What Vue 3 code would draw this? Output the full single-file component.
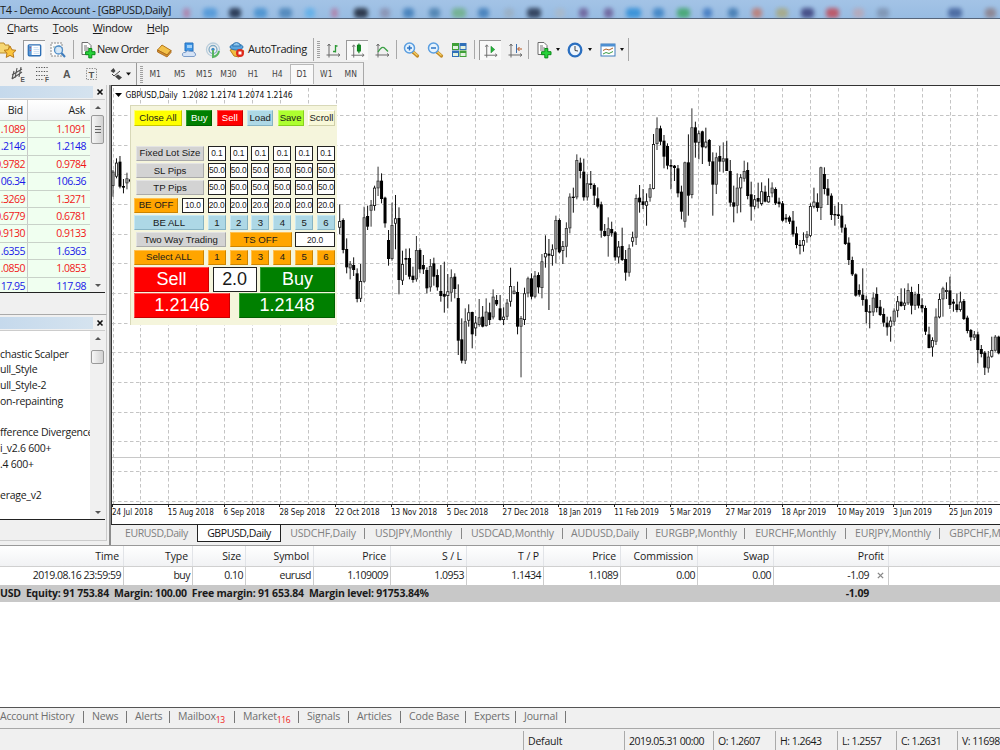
<script setup>
import { ref } from 'vue'

const menus = ['Charts', 'Tools', 'Window', 'Help']

// toolbar slots, left to right; w is the slot width
const toolbar = [
  { icon: 'star', w: 18 },
  { icon: 'nav', w: 31, on: true },
  { icon: 'search', w: 18 },
  { sep: true, w: 12 },
  { icon: 'order', w: 18 },
  { text: 'New Order', w: 58 },
  { icon: 'book', w: 18 },
  { icon: 'cloud', w: 31 },
  { icon: 'signal', w: 18 },
  { icon: 'auto', w: 26 },
  { text: 'AutoTrading', w: 66, end: true },
  { grip: true, w: 8 },
  { icon: 'bars', w: 22 },
  { icon: 'candle', w: 26, on: true },
  { icon: 'line', w: 24 },
  { sep: true, w: 4 },
  { icon: 'zoomin', w: 26 },
  { icon: 'zoomout', w: 22 },
  { icon: 'tiles', w: 26 },
  { sep: true, w: 4 },
  { icon: 'scroll', w: 28, on: true },
  { icon: 'shift', w: 22 },
  { sep: true, w: 4 },
  { w: 3 },
  { icon: 'addind', w: 22 },
  { arrow: true, w: 5 },
  { w: 3 },
  { icon: 'clock', w: 24 },
  { arrow: true, w: 5 },
  { w: 5 },
  { icon: 'template', w: 22 },
  { arrow: true, w: 5 },
  { w: 5, end: true }
]

const frames = ['M1', 'M5', 'M15', 'M30', 'H1', 'H4', 'D1', 'W1', 'MN']

// running taskbar icons seen through the title bar glass
const glass = [
  [186, 7, '#b07fa8'], [210, 14, '#4f97d8'], [235, 12, '#1c2a44'], [260, 13, '#4690cf'], [285, 13, '#4a83b8'],
  [310, 10, '#5fb0ea'], [334, 7, '#b07fa8'], [361, 14, '#1c2536'], [385, 10, '#8a90b0'], [408, 11, '#3f7cb8'],
  [434, 11, '#4a7fae'], [459, 14, '#6fb088'], [483, 11, '#3f7cb8'], [509, 10, '#9bb0c4'], [534, 14, '#25334d'],
  [560, 10, '#a9b9cb'], [583, 9, '#6a5c96'], [608, 9, '#6a5c96'], [633, 15, '#2f8ed8'], [658, 11, '#3b82c4'],
  [683, 13, '#3fa66a'], [707, 9, '#3f78c0'], [733, 10, '#3f78b0'], [757, 10, '#c07a70'], [782, 12, '#a8a880'],
  [807, 13, '#3a3f7a'], [832, 13, '#c04a58'], [858, 11, '#b8a8b8'], [883, 12, '#7e92b0'], [955, 14, '#41609a'],
  [990, 11, '#8c7f88']
]

const quotes = [
  ['1.1089', '1.1091', 0], ['1.2146', '1.2148', 1], ['0.9782', '0.9784', 0], ['106.34', '106.36', 1],
  ['1.3269', '1.3271', 0], ['0.6779', '0.6781', 0], ['0.9130', '0.9133', 0], ['1.6355', '1.6363', 1],
  ['1.0850', '1.0853', 0], ['117.95', '117.98', 1]
]

const scripts = ['', 'chastic Scalper', 'ull_Style', 'ull_Style-2', 'on-repainting', '', 'fference Divergence', 'i_v2.6 600+', '.4 600+', '', 'erage_v2']

// high low top bottom kind, in thirds of a pixel below the plot top
// b = bear, w = bull, g = bull drawn tight
const early = '240 320 245 288 g,205 265 218 260 w,198 295 215 290 b,267 310 288 293 b,248 298 265 280 g,265 280 268 275 b'
const series = `343 433 393 413 w,385 490 390 480 b,445 550 477 532 b,513 568 521 535 g,502 558 525 540 b,535 637 550 627 b,
522 636 573 626 w,350 578 382 575 g,347 420 378 410 b,330 410 345 362 g,287 362 293 348 w,230 318 272 295 g,
250 340 272 327 b,320 413 323 400 b,420 527 450 507 b,338 512 405 507 g,315 478 385 401 w,352 613 384 570 b,
482 585 522 572 w,476 555 504 509 b,475 568 504 560 b,530 578 557 570 b,438 575 480 568 g,475 550 480 538 b,
495 552 525 538 b,532 610 540 595 b,507 605 528 592 g,503 587 520 560 b,538 602 555 592 b,525 635 603 618 b,
515 668 612 620 b,552 655 604 618 w,538 635 562 608 g,550 625 560 597 b,583 795 624 752 b,685 820 748 812 b,
655 822 694 812 g,643 710 667 692 w,665 775 666 733 b,678 738 698 715 w,627 710 682 705 g,648 712 680 710 b,
625 710 665 708 g,638 705 667 690 b,598 688 620 682 g,615 648 630 643 b,615 692 655 690 b,652 705 680 690 w,
627 690 638 680 g,533 650 588 635 w,588 613 602 612 g,575 733 606 710 b,678 862 684 710 g,593 705 610 690 w,
560 622 565 610 g,550 628 565 620 b,543 625 557 620 g,547 610 555 592 b,492 625 514 594 g,436 533 489 502 w,
447 660 491 497 b,463 527 478 498 w,377 520 390 478 g,385 490 390 487 b,453 522 468 483 w,397 502 414 470 g,
310 430 320 415 g,293 368 320 324 b,193 328 210 322 g,203 265 218 243 b,206 332 245 322 b,253 332 280 322 g,
243 297 280 285 b,280 345 285 317 b,292 355 325 350 b,335 443 343 422 b,402 440 423 438 b,382 500 415 438 g,
395 440 417 430 b,423 512 427 502 b,453 520 470 502 w,413 513 468 510 b,480 572 507 548 b,463 560 475 548 g,
425 470 442 455 w,313 465 324 443 g,285 368 323 337 b,297 357 334 345 b,310 407 334 347 w,282 335 295 323 g,
132 298 162 297 w,82 180 115 162 g,107 165 115 155 b,135 235 152 200 b,160 238 168 227 b,208 298 225 230 b,
225 273 227 234 b,225 322 235 310 b,287 388 305 365 b,215 413 217 395 g,133 377 217 317 b,55 325 112 315 g,
95 203 112 158 b,122 208 130 158 w,122 222 124 172 b,113 175 155 172 w,147 228 150 215 b,187 377 214 284 b,
188 312 202 284 g,168 245 198 215 b,157 248 205 215 g,152 243 205 243 b,210 350 243 338 b,287 397 337 350 b,
250 370 293 347 g,252 367 262 295 w,212 275 243 266 g,217 328 240 318 b,275 392 313 350 b,315 358 328 350 w,
278 355 324 335 b,277 347 304 342 w,287 337 305 335 b,265 338 318 337 w,277 322 293 310 g,292 345 297 340 b,
323 352 335 342 b,333 395 340 392 b,372 398 383 388 b,377 402 382 395 b,363 440 392 433 b,410 475 430 465 b,
450 493 464 468 b,427 485 450 467 w,423 458 433 443 g,340 442 348 438 w,293 355 335 350 w,310 365 337 354 b,
230 390 232 354 g,232 313 252 297 b,267 345 295 317 b,310 390 317 375 b,347 407 372 376 b,337 387 373 378 b,
342 428 377 413 b,403 465 413 462 b,442 525 458 510 b,500 558 510 553 b,550 620 553 617 b,583 620 600 614 b,
535 647 614 630 b,617 700 628 666 b,645 715 664 668 b,607 678 623 667 g,592 667 612 654 b,630 678 650 675 b,
655 710 672 698 b,680 737 698 712 b,680 755 692 710 w,655 707 662 695 g,618 682 634 662 w,595 650 635 648 b,
595 660 638 647 w,580 645 600 640 g,590 673 606 647 b,605 660 613 647 g,582 655 612 647 b,625 667 645 655 b,
647 735 654 725 b,710 775 733 774 b,742 800 750 772 w,655 765 680 755 g,610 685 627 682 w,590 680 595 628 g,
577 627 600 606 w,560 657 601 645 b,627 665 635 641 b,610 667 643 660 b,605 665 635 660 w,627 690 633 687 b,
677 730 683 723 b,717 753 720 742 b,723 750 733 743 g,725 820 733 780 b,765 802 777 792 b,783 855 788 833 b,
783 848 800 835 g,740 803 780 800 w,735 785 740 782 g,737 793 740 790 b`

function parse(text, x0) {
  return text.split(',').map((row, i) => {
    const [h, l, t, b, kind] = row.trim().split(' ')
    return { x: x0 + i * 3.487, h: 90 + h / 3, l: 90 + l / 3, t: 90 + t / 3, b: 90 + b / 3, kind }
  })
}

const candles = [...parse(early, 113), ...parse(series, 339.7)]
const gridX = Array.from({ length: 32 }, (_, i) => Math.round(112.5 + i * 27.9) + 0.5)
const gridY = Array.from({ length: 14 }, (_, i) => Math.round(115 + i * 29.66) + 0.5)
const dates = ['24 Jul 2018', '15 Aug 2018', '6 Sep 2018', '28 Sep 2018', '22 Oct 2018', '13 Nov 2018', '5 Dec 2018', '27 Dec 2018', '18 Jan 2019', '11 Feb 2019', '5 Mar 2019', '27 Mar 2019', '18 Apr 2019', '10 May 2019', '3 Jun 2019', '25 Jun 2019']

const six = (text, kind) => Array.from({ length: 6 }, (_, i) => ({ text: text || String(i + 1), w: 18, kind }))
const panel = [
  { cls: 'top', cells: [
    { text: 'Close All', w: 48, kind: 'yellow' }, { text: 'Buy', w: 26, kind: 'green' }, { text: 'Sell', w: 26, kind: 'red' },
    { text: 'Load', w: 26, kind: 'blue' }, { text: 'Save', w: 26, kind: 'lime' }, { text: 'Scroll', w: 27, kind: 'cream' }
  ] },
  { cells: [{ text: 'Fixed Lot Size', w: 68, kind: 'gray' }, ...six('0.1', 'input')] },
  { cells: [{ text: 'SL Pips', w: 68, kind: 'gray' }, ...six('50.0', 'input')] },
  { cells: [{ text: 'TP Pips', w: 68, kind: 'gray' }, ...six('50.0', 'input')] },
  { cells: [{ text: 'BE OFF', w: 44, kind: 'orange' }, { text: '10.0', w: 22, kind: 'input' }, ...six('20.0', 'input')] },
  { cells: [{ text: 'BE ALL', w: 70, kind: 'blue' }, ...six('', 'blue')] },
  { cells: [{ text: 'Two Way Trading', w: 90, kind: 'gray' }, { text: 'TS OFF', w: 62, kind: 'orange' }, { text: '20.0', w: 40, kind: 'input' }] },
  { cells: [{ text: 'Select ALL', w: 70, kind: 'orange' }, ...six('', 'orange')] },
  { cls: 'big', cells: [{ text: 'Sell', w: 75, kind: 'red' }, { text: '2.0', w: 44, kind: 'input' }, { text: 'Buy', w: 75, kind: 'green' }] },
  { cls: 'big', cells: [{ text: '1.2146', w: 96, kind: 'red' }, { text: '1.2148', w: 96, kind: 'green' }] }
]

const activeTab = ref('GBPUSD,Daily')
const chartTabs = [
  ['EURUSD,Daily', 87], ['GBPUSD,Daily', 84], ['USDCHF,Daily', 84], ['USDJPY,Monthly', 97], ['USDCAD,Monthly', 101],
  ['AUDUSD,Daily', 84], ['EURGBP,Monthly', 98], ['EURCHF,Monthly', 101], ['EURJPY,Monthly', 94], ['GBPCHF,Monthly', 100]
]

const columns = [
  ['Time', 124, '2019.08.16 23:59:59'], ['Type', 69, 'buy'], ['Size', 53, '0.10'], ['Symbol', 68, 'eurusd'], ['Price', 77, '1.109009'],
  ['S / L', 76, '1.0953'], ['T / P', 77, '1.1434'], ['Price', 77, '1.1089'], ['Commission', 77, '0.00'], ['Swap', 76, '0.00'], ['Profit', 115, '-1.09']
]

const bottomTabs = [
  ['Account History', 84], ['News', 43], ['Alerts', 43], ['Mailbox', 65, '13'], ['Market', 64, '116'], ['Signals', 50],
  ['Articles', 52], ['Code Base', 65], ['Experts', 50], ['Journal', 50]
]

const status = [['Default', 101], ['2019.05.31 00:00', 89], ['O: 1.2607', 62], ['H: 1.2643', 62], ['L: 1.2557', 59], ['C: 1.2631', 61], ['V: 11698', 60]]
</script>

<template>
  <div class="terminal">
    <header class="titlebar">
      <i v-for="g in glass" :key="g[0]" class="glow" :style="{ left: g[0] - g[1] / 2 + 'px', width: g[1] + 'px', background: g[2] }"></i>
      <span class="title">T4 - Demo Account - [GBPUSD,Daily]</span>
    </header>

    <nav class="menubar">
      <span v-for="m in menus" :key="m"><u>{{ m[0] }}</u>{{ m.slice(1) }}</span>
    </nav>

    <div class="toolbar">
      <div v-for="(t, i) in toolbar" :key="i" class="slot" :class="{ end: t.end, on: t.on }" :style="{ width: t.w + 'px' }">
        <span v-if="t.text" class="label">{{ t.text }}</span>
        <i v-else-if="t.sep" class="sep"></i>
        <i v-else-if="t.grip" class="grip"></i>
        <i v-else-if="t.arrow" class="arrow"></i>
        <svg v-else-if="t.icon" class="icon" viewBox="0 0 18 18">
          <g v-if="t.icon === 'star'">
            <path d="M-1 2h5l1 2h4v8h-10z" fill="#f6d774" stroke="#b98a2c" />
            <path d="M10 5l1.900 3.800 4.100.5-3 2.900.8 4.200-3.800-2-3.800 2 .8-4.200-3-2.900 4.100-.5z" fill="#fbc53c" stroke="#b9781a" />
          </g>
          <g v-else-if="t.icon === 'nav'">
            <rect x="2.500" y="3" width="13" height="11.500" rx="1" fill="#fff" stroke="#2e6fb5" stroke-width="1.500" />
            <path d="M3 4h3v10H3z" fill="#5b9bd8" />
            <path d="M8 6h5M8 8h6M8 10h6M8 12h6" stroke="#c7dcf2" />
            <path d="M4 6h1M4 9h1" stroke="#d23" />
          </g>
          <g v-else-if="t.icon === 'search'">
            <rect x="2" y="2" width="11" height="13" fill="#fafafa" stroke="#8a8a8a" stroke-dasharray="2 1" />
            <path d="M4 6h3v5M10 4v3" stroke="#8aa" fill="none" />
            <circle cx="9.500" cy="9" r="4" fill="#cfe5f7" fill-opacity=".8" stroke="#4f8ec9" stroke-width="1.300" />
            <path d="M12.500 12l3.500 4" stroke="#3f7dbd" stroke-width="2" />
          </g>
          <g v-else-if="t.icon === 'order' || t.icon === 'addind'">
            <path d="M3 1.500h6l3 3v9h-9z" fill="#fdfdfd" stroke="#6d6d6d" />
            <path d="M5 5h3M5 7h5M5 9h4" stroke="#777" />
            <path d="M9.800 7.500h3v3.200h3.200v3h-3.200v3.200h-3v-3.200H6.600v-3h3.200z" fill="#27d33b" stroke="#0b8a18" />
          </g>
          <g v-else-if="t.icon === 'book'">
            <path d="M2.500 9l4.500-5 9 5.500-4 4.500z" fill="#f3c24a" stroke="#b4761b" />
            <path d="M2.500 9v2l9.500 5 4-4.500v-2l-4 4.500z" fill="#d9932c" stroke="#a3651a" stroke-width=".8" />
          </g>
          <g v-else-if="t.icon === 'cloud'">
            <path d="M5 2h8v8H5z" fill="#3d95e6" stroke="#2470bd" />
            <path d="M7 4h5v3H7z" fill="#9fd0fa" />
            <path d="M4 15.500q-2.500-.5-1.500-3 1-1.500 3-1 1.500-3 5-1 3-.8 4.500 1.500 2 2.500-1 3.500z" fill="#d5e3f6" stroke="#7b9cc9" />
          </g>
          <g v-else-if="t.icon === 'signal'" fill="none">
            <circle cx="9" cy="8.500" r="6.500" stroke="#b9cddb" stroke-width="1.300" />
            <circle cx="9" cy="8.500" r="4" stroke="#7fa9c4" stroke-width="1.300" />
            <circle cx="9" cy="8.500" r="1.700" fill="#3c8ac2" />
            <path d="M9 9v7q5-1 6-6" stroke="#58b560" stroke-width="2" />
          </g>
          <g v-else-if="t.icon === 'auto'" transform="translate(2 0)">
            <path d="M2 9l7-2 7 3-5 6-5-1z" fill="#f2bd3f" stroke="#b9801c" />
            <ellipse cx="8.500" cy="6" rx="6.500" ry="3" fill="#5aa5de" stroke="#2e74b0" />
            <path d="M4.500 5q.5-3.500 4-3.500t4 3.500z" fill="#8ec7f0" stroke="#2e74b0" />
            <circle cx="12" cy="12" r="4" fill="#df2a1c" />
            <path d="M10.500 10.500h3v3h-3z" fill="#fff" />
          </g>
          <g v-else-if="['bars', 'candle', 'line', 'scroll', 'shift'].includes(t.icon)" fill="none">
            <path d="M5 3.500v13M2.500 14h13M3.500 5l1.500-2 1.500 2M14 12.500l2 1.500-2 1.500" stroke="#6a6a6a" />
            <path v-if="t.icon === 'bars'" d="M11.500 4v7.500M11.500 5h2M9 10.500h2.500" stroke="#2c9a35" stroke-width="1.300" />
            <path v-if="t.icon === 'candle'" d="M10.500 1.500v10.500M9 3.500h3v6H9z" stroke="#0b7d1a" fill="#1fc236" stroke-width="1.200" />
            <path v-if="t.icon === 'line'" d="M5 11q4-7 7-3.500l3 3" stroke="#3ba045" stroke-width="1.300" />
            <path v-if="t.icon === 'scroll'" d="M9.500 4.500v7l4-3.500z" fill="#28b43a" stroke="#13832a" stroke-width=".6" />
            <path v-if="t.icon === 'shift'" d="M10.500 3v9" stroke="#3b6fae" />
            <path v-if="t.icon === 'shift'" d="M16 8h-4M13.500 6l-2 2 2 2" stroke="#b8561f" />
          </g>
          <g v-else-if="t.icon === 'zoomin' || t.icon === 'zoomout'">
            <path d="M11 11l4.500 4" stroke="#c28a25" stroke-width="3.200" stroke-linecap="round" />
            <path d="M11 10.500l4.500 4" stroke="#f5cf66" stroke-width="1.400" />
            <circle cx="7.500" cy="7" r="5" fill="#e6f3fd" stroke="#5a9ee0" stroke-width="1.500" />
            <path d="M5 7h5" stroke="#2c74c4" stroke-width="1.500" />
            <path v-if="t.icon === 'zoomin'" d="M7.500 4.500v5" stroke="#2c74c4" stroke-width="1.500" />
          </g>
          <g v-else-if="t.icon === 'tiles'">
            <path d="M2 2h7v7H2zM9.500 9.500h7v6.500h-7z" fill="#3fa037" />
            <path d="M9.500 2h7v7h-7zM2 9.500h7V16H2z" fill="#2f6fb8" />
            <path d="M3 5h5v3H3zM10.500 5h5v3h-5zM3 12h5v3H3zM10.500 12h5v3h-5z" fill="#e3f2e0" />
          </g>
          <g v-else-if="t.icon === 'clock'">
            <circle cx="9" cy="9" r="6.300" fill="#eef5fc" stroke="#2b6fc0" stroke-width="2.300" />
            <path d="M9 5v4.500l3 .5" stroke="#444" fill="none" />
          </g>
          <g v-else-if="t.icon === 'template'">
            <rect x="2" y="3" width="14" height="12" fill="#fff" stroke="#3f7dbd" />
            <path d="M2 3h14v2.500H2z" fill="#4d8fd1" />
            <path d="M4 9.500l3-1.500 3 1 4-2" stroke="#b0622a" fill="none" />
            <path d="M4 13l3-1.500 3 1 4-2" stroke="#3a9b45" fill="none" />
          </g>
        </svg>
      </div>
    </div>

    <div class="toolbar second">
      <div class="draw">
        <svg viewBox="0 0 136 22" width="136" height="22">
          <g fill="none" stroke="#555">
            <path d="M12 12l10-6M12 16l10-7M14 8l-2 8M17 5l-2 10M21 4l-2 10" stroke-width="1.100" />
            <path d="M36 4.500h12M36 8.500h12M36 12.500h12M36 16.500h8" stroke-dasharray="1.300 1.300" />
            <rect x="86.500" y="5.500" width="10" height="11" stroke="#888" stroke-dasharray="1.300 1.300" />
          </g>
          <path d="M110.500 8l3-3 2 3-2 2zM115 13.500l3-2 4 3-3 2.500z" fill="#444" />
          <path d="M112 11l2 2 6-5" stroke="#444" fill="none" />
          <path d="M126 9.500h5l-2.500 3z" fill="#111" />
          <g class="tooltext">
            <text x="20.500" y="19" font-size="6.500">E</text>
            <text x="45" y="19" font-size="6.500">F</text>
            <text x="63" y="15" font-size="10.500">A</text>
            <text x="88.500" y="14.500" font-size="9.500">T</text>
          </g>
        </svg>
      </div>
      <i class="grip"></i>
      <span v-for="f in frames" :key="f" class="frame" :class="{ on: f === 'D1' }">{{ f }}</span>
    </div>

    <div class="main">
      <aside class="side">
        <section class="market">
          <div class="caption"><b></b><svg viewBox="0 0 8 8"><path d="M1.500 1.500l5 5M6.500 1.500l-5 5" /></svg></div>
          <div class="pane">
            <div class="quotes">
              <div class="quote qhead"><span>Bid</span><span>Ask</span></div>
              <div v-for="q in quotes" :key="q[0]" class="quote" :class="{ up: q[2] }"><span>{{ q[0] }}</span><span>{{ q[1] }}</span></div>
            </div>
            <div class="bar"><i class="tri upward"></i><i class="thumb long"></i><i class="tri"></i></div>
          </div>
        </section>
        <section class="navigator">
          <div class="caption"><b></b><svg viewBox="0 0 8 8"><path d="M1.500 1.500l5 5M6.500 1.500l-5 5" /></svg></div>
          <div class="pane">
            <div class="tree"><div v-for="(s, i) in scripts" :key="i">{{ s }}</div></div>
            <div class="bar"><i class="tri upward"></i><i class="thumb"></i><i class="tri"></i></div>
          </div>
        </section>
      </aside>

      <section class="work">
        <div class="chart">
          <svg class="plot" viewBox="112 88 888 435" width="888" height="435">
            <g stroke="#c4c4c4" stroke-dasharray="3.500 2.500">
              <path v-for="x in gridX" :key="'x' + x" :d="`M${x} 88V504`" />
              <path v-for="y in gridY" :key="'y' + y" :d="`M112 ${y}H1000`" />
            </g>
            <path d="M112 457.500H1000" stroke="#c8c8c8" />
            <g v-for="(c, i) in candles" :key="i">
              <rect :x="c.x - 0.500" :y="c.h" width="1" :height="c.l - c.h" :fill="c.kind === 'g' ? '#333' : '#111'" />
              <rect v-if="c.kind === 'b'" :x="c.x - 1.500" :y="c.t" width="3" :height="c.b - c.t" />
              <rect v-else :x="c.x - 1.100" :y="c.t + 0.400" width="2.200" :height="Math.max(c.b - c.t - 0.800, 1)" :fill="c.kind === 'g' ? '#a8a8a8' : '#fff'" :stroke="c.kind === 'g' ? '#333' : '#111'" stroke-width=".8" />
            </g>
            <path d="M112 504.500H1000" stroke="#222" />
            <g v-for="(d, i) in dates" :key="d">
              <path :d="`M${Math.round(112 + i * 55.8) + 0.5} 504v3`" stroke="#222" />
              <text class="date" :x="112 + i * 55.8" y="515">{{ d }}</text>
            </g>
            <path d="M115 93h7l-3.500 4z" />
            <text class="quoteline" x="125.500" y="98" textLength="167">GBPUSD,Daily&nbsp; 1.2082 1.2174 1.2074 1.2146</text>
          </svg>
          <div class="panel">
            <div v-for="(r, i) in panel" :key="i" class="prow" :class="r.cls">
              <span v-for="(c, j) in r.cells" :key="j" class="cell" :class="c.kind" :style="{ width: c.w + 'px' }">{{ c.text }}</span>
            </div>
          </div>
        </div>
        <div class="charttabs">
          <span v-for="t in chartTabs" :key="t[0]" :class="{ active: t[0] === activeTab }" :style="{ width: t[1] + 'px' }" @click="activeTab = t[0]">{{ t[0] }}</span>
        </div>
      </section>
    </div>

    <section class="orders">
      <div class="orow ohead">
        <span v-for="(c, i) in columns" :key="i" :style="{ width: c[1] + 'px' }">{{ c[0] }}</span>
      </div>
      <div class="orow">
        <span v-for="(c, i) in columns" :key="i" :style="{ width: c[1] + 'px' }">{{ c[2] }}<svg v-if="i === 10" viewBox="0 0 8 8"><path d="M1 1l6 6M7 1l-6 6" /></svg></span>
      </div>
      <div class="summary">
        <span>USD&nbsp; Equity: 91 753.84&nbsp; Margin: 100.00&nbsp; Free margin: 91 653.84&nbsp; Margin level: 91753.84%</span><span>-1.09</span>
      </div>
    </section>

    <div class="bottomtabs">
      <span v-for="t in bottomTabs" :key="t[0]" :style="{ width: t[1] + 'px' }">{{ t[0] }}<sub v-if="t[2]">{{ t[2] }}</sub></span>
    </div>

    <footer class="status">
      <span v-for="s in status" :key="s[0]" :style="{ width: s[1] + 'px' }">{{ s[0] }}</span>
    </footer>
  </div>
</template>

<style>
body {
  margin: 0;
  overflow: hidden;
}
</style>

<style scoped>
.terminal {
  width: 1000px;
  height: 750px;
  overflow: hidden;
  display: flex;
  flex-direction: column;
  background: #f0f0f0;
  color: #1a1a1a;
  font-family: "Open Sans", "Noto Sans", sans-serif;
  font-size: 10.5px;
  white-space: nowrap;
}

.terminal * {
  box-sizing: border-box;
}

.titlebar {
  position: relative;
  height: 19px;
  flex: none;
  overflow: hidden;
  background: linear-gradient(#a3c3e6, #98bce2);
  border-bottom: 1px solid #56657a;
}

.glow {
  position: absolute;
  top: 8px;
  height: 10px;
  border-radius: 4px;
  filter: blur(2.2px);
  opacity: 0.85;
}

.title {
  position: relative;
  display: block;
  line-height: 19px;
  font-size: 11px;
  letter-spacing: -0.42px;
}

.menubar {
  height: 18px;
  flex: none;
  display: flex;
  gap: 15px;
  padding-left: 7px;
  line-height: 18px;
  font-size: 11px;
  letter-spacing: -0.45px;
}

.toolbar {
  height: 25px;
  flex: none;
  display: flex;
  align-items: center;
}

.slot {
  height: 23px;
  flex: none;
  display: flex;
  align-items: center;
  justify-content: center;
}

.slot.end {
  border-right: 1px solid #a8a8a8;
}

.icon {
  width: 18px;
  height: 18px;
  flex: none;
  overflow: visible;
}

.on .icon {
  width: 22px;
  height: 20px;
  padding: 1px 2px;
  background: #f9f9f9;
  border-top: 1px solid #999;
  border-left: 1px solid #999;
}

.label {
  width: 100%;
  font-size: 11px;
  line-height: 18px;
  padding-bottom: 2px;
  letter-spacing: -0.55px;
}

.slot.end .label {
  letter-spacing: -0.4px;
}

.sep {
  width: 1px;
  height: 19px;
  background: #a8a8a8;
}

.grip {
  width: 3px;
  height: 17px;
  flex: none;
  background: repeating-linear-gradient(#a0a0a0 0 1px, #f0f0f0 1px 2px);
}

.arrow {
  border: 2.5px solid transparent;
  border-top: 3px solid #111;
  border-bottom: 0;
}

.second {
  height: 23px;
  border-top: 1px solid #b4b4b4;
  width: 364px;
  border-right: 1px solid #a8a8a8;
  font-family: "DejaVu Sans Condensed", "DejaVu Sans", sans-serif;
  font-size: 8.5px;
  color: #444;
}

.draw {
  width: 137px;
  height: 22px;
  border-right: 1px solid #999;
  margin-right: 3px;
}

.tooltext {
  font-family: "Liberation Sans", sans-serif;
  font-weight: bold;
  fill: #555;
}

.frame {
  width: 24.5px;
  height: 20px;
  line-height: 20px;
  text-align: center;
}

.frame.on {
  background: #f9f9f9;
  border: 1px solid #b8b8b8;
  border-width: 1px 1px 0 1px;
  line-height: 18px;
}

.main {
  height: 460px;
  flex: none;
  display: flex;
}

.side {
  width: 109px;
  flex: none;
  display: flex;
  flex-direction: column;
}

.market {
  height: 229px;
}

.navigator {
  height: 227px;
  border-top: 1px solid #aaa;
  padding-top: 1px;
  border-bottom: 1px solid #ccc;
}

.market,
.navigator {
  width: 107px;
  border-right: 1px solid #ccc;
}

.caption {
  height: 14px;
  display: flex;
  align-items: center;
}

.caption b {
  width: 93px;
  height: 12px;
  background: linear-gradient(90deg, #c5d9ec, #d5e3ef);
}

.caption svg {
  width: 8px;
  height: 8px;
  margin-left: 3px;
  stroke: #111;
  stroke-width: 1.6;
}

.pane {
  width: 105px;
  display: flex;
  background: #fff;
  border-top: 1px solid #ccc;
  border-bottom: 1px solid #222;
}

.market .pane {
  height: 194px;
}

.navigator .pane {
  height: 190px;
}

.quotes {
  width: 90px;
  overflow: hidden;
}

.quote {
  height: 17.4px;
  line-height: 16px;
  display: flex;
  background: #f0fff0;
  border-bottom: 1px solid #c9d2c9;
  color: #f01818;
}

.quote span {
  display: flex;
  justify-content: flex-end;
  flex: none;
  letter-spacing: -0.5px;
}

.quote span:first-child {
  width: 28px;
  padding-right: 2px;
  border-right: 1px solid #c8c8c8;
}

.quote span:last-child {
  width: 58px;
}

.quote.up {
  color: #1818e8;
}

.quote.qhead {
  height: 21px;
  line-height: 20px;
  color: #222;
  background: linear-gradient(#fff, #f1f2f4);
}

.quote.qhead span {
  letter-spacing: -0.2px;
}

.quote.qhead span:first-child {
  padding-right: 4px;
}

.quote.qhead span:last-child {
  width: 57px;
}

.bar {
  width: 15px;
  margin-left: auto;
  display: flex;
  flex-direction: column;
  align-items: center;
  background: #f0f0f0;
}

.tri {
  margin: auto 0 5px;
  border: 3px solid transparent;
  border-top: 3.5px solid #555;
  border-bottom: 0;
}

.tri.upward {
  margin: 6px 0;
  border-top: 0;
  border-bottom: 3.5px solid #555;
}

.thumb {
  width: 13px;
  height: 14px;
  margin-top: 4px;
  border: 1px solid #999;
  border-radius: 2px;
  background: linear-gradient(90deg, #f6f6f6, #d2d2d2);
}

.thumb.long {
  height: 29px;
  margin-top: 0;
  background: repeating-linear-gradient(#666 0 1px, transparent 1px 3px) 3px 10px / 6px 8px no-repeat, linear-gradient(90deg, #f6f6f6, #d2d2d2);
}

.tree {
  width: 90px;
  margin-top: -1px;
  overflow: hidden;
  letter-spacing: -0.25px;
}

.tree div {
  height: 15.7px;
  line-height: 16px;
}

.work {
  width: 891px;
  display: flex;
  flex-direction: column;
  border-left: 2px solid #8c8c8c;
}

.chart {
  position: relative;
  height: 439px;
  padding-top: 2px;
  background: #fff;
  border-left: 1px solid #333;
  border-top: 1px solid #333;
}

.plot {
  display: block;
}

.date,
.quoteline {
  font-family: "DejaVu Sans Condensed", "DejaVu Sans", sans-serif;
  font-size: 8px;
  letter-spacing: 0;
  fill: #111;
}

.quoteline {
  font-size: 8.5px;
}

/* trade panel floats over the plot */
.panel {
  position: absolute;
  left: 18px;
  top: 19px;
  width: 207px;
  height: 220px;
  padding: 4px 2px 0 3px;
  background: #f5f5dc;
  border-left: 1px solid #d8d8b8;
  border-top: 1px solid #d8d8b8;
  font-family: "Liberation Sans", sans-serif;
  font-size: 9.6px;
}

.prow {
  display: flex;
  justify-content: space-between;
  height: 15px;
  margin-bottom: 2.35px;
}

.prow.top {
  height: 16px;
  margin-bottom: 19.5px;
}

.cell {
  display: flex;
  align-items: center;
  justify-content: center;
  overflow: hidden;
  border: 1px solid;
  line-height: 1;
}

.cell.gray {
  margin-left: 2px;
  background: #d3d3d3;
  border-color: #e4e4e4 #aaa #aaa #e4e4e4;
}

.cell.yellow {
  background: #ff0;
  border-color: #ffff70 #c8c800 #c8c800 #ffff70;
}

.cell.green {
  background: #008000;
  border-color: #30a030 #006000 #006000 #30a030;
  color: #fff;
}

.cell.red {
  background: #f00;
  border-color: #ff5050 #c80000 #c80000 #ff5050;
  color: #fff;
}

.cell.blue {
  background: #add8e6;
  border-color: #c8e8f4 #86b4c4 #86b4c4 #c8e8f4;
}

.cell.lime {
  background: #adff2f;
  border-color: #caff70 #88d020 #88d020 #caff70;
}

.cell.cream {
  background: #f8f8d8;
  border-color: #fff #d0d0a8 #d0d0a8 #fff;
}

.cell.orange {
  background: #ffa500;
  border-color: #ffc050 #cc8400 #cc8400 #ffc050;
}

.cell.input {
  background: #fff;
  border-color: #222;
  font-size: 8.4px;
  letter-spacing: -0.1px;
}

.big.prow {
  height: 25px;
  margin-bottom: 1px;
}

.big .cell,
.big .cell.input {
  font-size: 18px;
}

.charttabs {
  height: 18px;
  display: flex;
  width: 889px;
  overflow: hidden;
  border-top: 1px solid #222;
  color: #808080;
  letter-spacing: -0.15px;
}

.charttabs span {
  position: relative;
  flex: none;
  line-height: 16px;
  text-align: center;
}

.charttabs span:first-child {
  margin-left: -1px;
  padding-left: 6px;
  letter-spacing: -0.4px;
}

.charttabs span:nth-child(n + 3)::after {
  content: "";
  position: absolute;
  right: 0;
  top: 3px;
  width: 1px;
  height: 11px;
  background: #888;
}

.charttabs .active {
  margin-top: -1px;
  line-height: 18px;
  background: #fff;
  border: 1px solid #222;
  border-top: 0;
  color: #111;
  letter-spacing: -0.4px;
}

.orders {
  height: 162px;
  flex: none;
  background: #fff;
  border-top: 1px solid #999;
}

.orow {
  display: flex;
  height: 18px;
  line-height: 17px;
  letter-spacing: -0.5px;
}

.orow span {
  position: relative;
  flex: none;
  padding-right: 2px;
  text-align: right;
  border-right: 1px solid #ccc;
}

.orow.ohead {
  height: 21px;
  line-height: 21px;
  background: linear-gradient(#fff, #f1f2f4);
  border-bottom: 1px solid #d0d0d0;
  letter-spacing: -0.1px;
}

.orow.ohead span {
  padding-right: 4px;
  border-color: #e2e4e8;
}

.orow:not(.ohead) span:last-child {
  padding-right: 19px;
}

.orow span svg {
  position: absolute;
  right: 4px;
  top: 5px;
  width: 7px;
  height: 7px;
  stroke: #888;
  stroke-width: 1.6;
}

.summary {
  height: 17px;
  line-height: 16px;
  display: flex;
  justify-content: space-between;
  padding-right: 131px;
  background: #c8c8c8;
  font-weight: 700;
  letter-spacing: -0.21px;
}

.bottomtabs {
  height: 22px;
  flex: none;
  display: flex;
  border-top: 1px solid #555;
  border-bottom: 1px solid #a8a8a8;
  color: #6e6e6e;
  letter-spacing: -0.15px;
}

.bottomtabs span {
  position: relative;
  line-height: 17px;
  padding-left: 8px;
}

.bottomtabs span:first-child {
  padding-left: 0;
  letter-spacing: -0.2px;
}

.bottomtabs span::after {
  content: "";
  position: absolute;
  right: 0;
  top: 3px;
  width: 1px;
  height: 12px;
  background: #777;
}

.bottomtabs sub {
  position: relative;
  top: 1px;
  font-size: 8.5px;
  line-height: 1;
  vertical-align: -2px;
  letter-spacing: -0.4px;
  color: #f01818;
}

.status {
  height: 21px;
  flex: none;
  display: flex;
  padding: 2px 0 0 523px;
}

.status span {
  flex: none;
  padding-left: 4px;
  line-height: 20px;
  border-left: 1px solid #aaa;
  letter-spacing: -0.5px;
}

.status span:first-child {
  letter-spacing: -0.2px;
}
</style>
